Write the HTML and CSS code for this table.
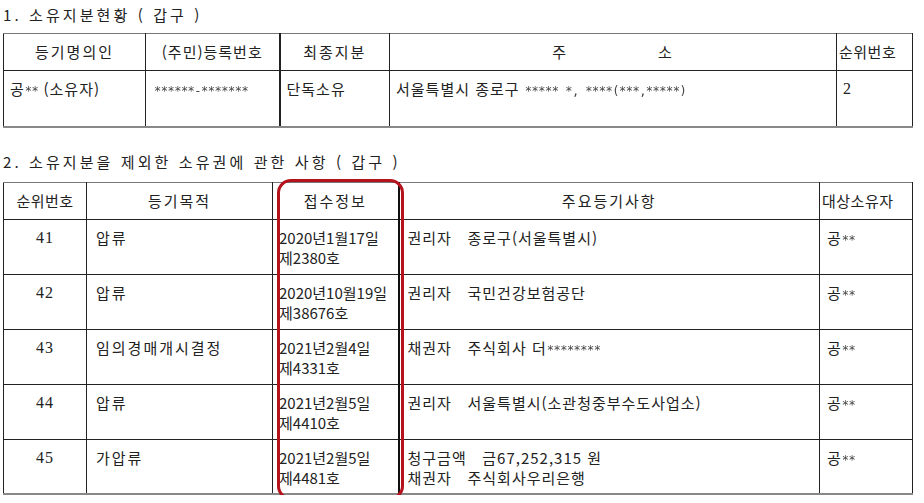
FILE: index.html
```html
<!DOCTYPE html>
<html lang="ko">
<head>
<meta charset="utf-8">
<link rel="stylesheet" href="styles.css">
</head>
<body>
<div class="page">
  <h2 class="title t1">1. 소유지분현황 ( 갑구 )</h2>
  <table class="grid g1">
    <colgroup>
      <col class="c142"><col class="c134"><col class="c110"><col class="c447"><col class="c76">
    </colgroup>
    <thead>
      <tr class="hrow">
        <th>등기명의인</th>
        <th>(주민)등록번호</th>
        <th class="thick">최종지분</th>
        <th>주<span class="gap"></span>소</th>
        <th>순위번호</th>
      </tr>
    </thead>
    <tbody>
      <tr class="drow1">
        <td>공<span class="ast">**</span> (소유자)</td>
        <td class="mask"><span class="ast">******-*******</span></td>
        <td class="thick">단독소유</td>
        <td>서울특별시 종로구 <span class="ast">***** *, ****(***,*****)</span></td>
        <td class="num">2</td>
      </tr>
    </tbody>
  </table>

  <h2 class="title t2">2. 소유지분을 제외한 소유권에 관한 사항 ( 갑구 )</h2>
  <div class="wrap">
    <table class="grid g2">
      <colgroup>
        <col class="c83"><col class="c186"><col class="c126"><col class="c421"><col class="c93">
      </colgroup>
      <thead>
        <tr class="hrow2">
          <th>순위번호</th>
          <th>등기목적</th>
          <th class="thickr">접수정보</th>
          <th>주요등기사항</th>
          <th>대상소유자</th>
        </tr>
      </thead>
      <tbody>
        <tr class="drow">
          <td class="num center">41</td>
          <td class="purpose">압류</td>
          <td class="thickr rcpt">2020년1월17일<br>제2380호</td>
          <td class="main">권리자   종로구(서울특별시)</td>
          <td class="owner">공<span class="ast">**</span></td>
        </tr>
        <tr class="drow">
          <td class="num center">42</td>
          <td class="purpose">압류</td>
          <td class="thickr rcpt">2020년10월19일<br>제38676호</td>
          <td class="main">권리자   국민건강보험공단</td>
          <td class="owner">공<span class="ast">**</span></td>
        </tr>
        <tr class="drow">
          <td class="num center">43</td>
          <td class="purpose">임의경매개시결정</td>
          <td class="thickr rcpt">2021년2월4일<br>제4331호</td>
          <td class="main">채권자   주식회사 더<span class="ast">********</span></td>
          <td class="owner">공<span class="ast">**</span></td>
        </tr>
        <tr class="drow">
          <td class="num center">44</td>
          <td class="purpose">압류</td>
          <td class="thickr rcpt">2021년2월5일<br>제4410호</td>
          <td class="main">권리자   서울특별시(소관청중부수도사업소)</td>
          <td class="owner">공<span class="ast">**</span></td>
        </tr>
        <tr class="drow">
          <td class="num center">45</td>
          <td class="purpose">가압류</td>
          <td class="thickr rcpt">2021년2월5일<br>제4481호</td>
          <td class="main">청구금액   금67,252,315 원<br>채권자   주식회사우리은행</td>
          <td class="owner">공<span class="ast">**</span></td>
        </tr>
      </tbody>
    </table>
    <div class="highlight"></div>
  </div>
</div>
</body>
</html>
```
FILE: styles.css
```css
html, body {
  margin: 0;
  padding: 0;
  background: #fff;
}
body {
  font-family: "Noto Sans CJK KR", "Noto Sans", sans-serif;
  font-size: 15px;
  color: #222;
}
.page {
  padding-left: 3px;
  width: 909px;
}
.title {
  margin: 0;
  font-weight: normal;
  font-size: 15px;
  letter-spacing: 3.1px;
  line-height: 20px;
  white-space: pre;
}
.t1 {
  padding-top: 5px;
  height: 28px;
}
.t2 {
  padding-top: 24px;
  height: 30px;
}
.grid {
  border-collapse: collapse;
  table-layout: fixed;
  width: 909px;
}
.grid th, .grid td {
  border: 1px solid #222;
  font-weight: normal;
  padding: 0;
  line-height: 20px;
  letter-spacing: 1px;
  white-space: pre;
  overflow: hidden;
}
.grid tr:first-child th { border-top-color: #777; }
.grid tbody tr:last-child td { border-bottom: 2px solid #888; }
.c142 { width: 142px; }
.c134 { width: 134px; }
.c110 { width: 110px; }
.c447 { width: 447px; }
.c76 { width: 76px; }
.c83 { width: 83px; }
.c186 { width: 186px; }
.c126 { width: 126px; }
.c421 { width: 421px; }
.c93 { width: 93px; }

.thick { border-left: 2px solid #222 !important; }
.thickr { border-right: 2px solid #111 !important; }

.hrow th {
  height: 36px;
  text-align: center;
  letter-spacing: 2px;
}
.hrow th:nth-child(2) { letter-spacing: 1px; }
.hrow th:last-child { text-align: left; padding-left: 2px; letter-spacing: 0.5px; }
.gap {
  display: inline-block;
  width: 90px;
}
.drow1 td {
  height: 56px;
  vertical-align: top;
  padding-top: 8px;
  padding-left: 6px;
  box-sizing: border-box;
}
.drow1 td.mask { padding-left: 8px; letter-spacing: 0; }
.drow1 td.num { padding-left: 6px; }
.num { font-family: "Liberation Serif", "Noto Sans CJK KR", serif; font-size: 16px; }

.hrow2 th {
  height: 36px;
  text-align: center;
  letter-spacing: 2px;
}
.hrow2 th:first-child { letter-spacing: 0.5px; }
.hrow2 th:last-child { text-align: left; padding-left: 2px; letter-spacing: 0.5px; }
.drow td {
  height: 55px;
  vertical-align: top;
  padding-top: 8px;
  box-sizing: border-box;
}
.center { text-align: center; }
.purpose { padding-left: 9px !important; letter-spacing: 2px !important; }
.rcpt { padding-left: 6px !important; letter-spacing: 0 !important; }
.main { padding-left: 8px !important; }
.owner { padding-left: 7px !important; }

.ast {
  display: inline-block;
  transform: translateZ(0);
  font-family: "DejaVu Sans Mono", monospace;
  font-size: 12px;
  letter-spacing: -0.5px;
  color: #444;
}

.wrap {
  position: relative;
}
.highlight {
  position: absolute;
  left: 274px;
  top: -3px;
  width: 121px;
  height: 315px;
  border: 3px solid #b4121c;
  border-radius: 14px;
  pointer-events: none;
}
```
